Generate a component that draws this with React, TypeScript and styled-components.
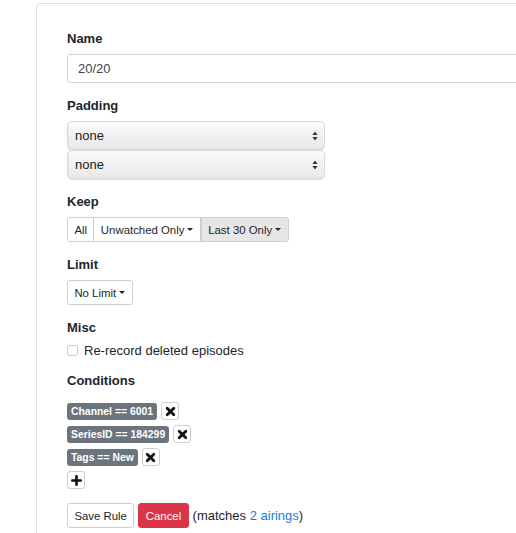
import React from "react";
import styled, { createGlobalStyle } from "styled-components";

const GlobalStyle = createGlobalStyle`
  html, body {
    margin: 0;
    padding: 0;
    overflow: hidden;
    background: #fff;
  }
  body {
    font-family: "Liberation Sans", Arial, Helvetica, sans-serif;
    font-size: 13px;
    color: #212529;
  }
`;

const Page = styled.div`
  padding: 3px 0 0 36px;
`;

const Card = styled.div`
  width: 620px;
  min-height: 620px;
  box-sizing: border-box;
  border: 1px solid #e1e1e1;
  border-radius: 4px;
  padding: 26px 30px;
`;

const FormGroup = styled.div`
  margin-bottom: 14px;
`;

const Label = styled.label`
  display: block;
  font-weight: bold;
  font-size: 13px;
  line-height: 18px;
  margin-bottom: 6px;
`;

const TextInput = styled.input`
  display: block;
  width: 100%;
  height: 29px;
  box-sizing: border-box;
  border: 1px solid #ced4da;
  border-radius: 3px;
  padding: 0 10px;
  font-family: inherit;
  font-size: 13px;
  color: #444;
  outline: none;
`;

const FakeSelect = styled.div`
  width: 258px;
  height: 29px;
  box-sizing: border-box;
  display: flex;
  align-items: center;
  justify-content: space-between;
  padding: 0 6px 0 7px;
  border: 1px solid #d9d9d9;
  border-radius: 5px;
  background: linear-gradient(#fbfbfb, #efefef 60%, #e9e9e9);
  box-shadow: 0 1px 1px rgba(0, 0, 0, 0.12), inset 1px 0 0 rgba(0, 0, 0, 0.04);
  font-size: 13px;
  color: #222;
`;

const SelectArrows = styled.svg`
  width: 6px;
  height: 10px;
`;

const ButtonGroup = styled.div`
  display: inline-flex;
`;

const Button = styled.button<{ $active?: boolean; $variant?: "default" | "danger" }>`
  display: inline-flex;
  align-items: center;
  font-family: inherit;
  font-size: 11.4px;
  line-height: 16px;
  padding: 3.5px 6.4px;
  border: 1px solid ${(p) => (p.$variant === "danger" ? "#dc3545" : "#cfcfcf")};
  border-radius: 3px;
  background: ${(p) =>
    p.$variant === "danger" ? "#dc3545" : p.$active ? "#e6e6e6" : "#fff"};
  color: ${(p) => (p.$variant === "danger" ? "#fff" : "#212529")};
  cursor: pointer;

  ${ButtonGroup} > & {
    border-radius: 0;
  }
  ${ButtonGroup} > & + & {
    margin-left: -1px;
  }
  ${ButtonGroup} > &:first-child {
    border-radius: 3px 0 0 3px;
  }
  ${ButtonGroup} > &:last-child {
    border-radius: 0 3px 3px 0;
  }
`;

const Caret = styled.span`
  display: inline-block;
  margin-left: 3px;
  width: 0;
  height: 0;
  border-top: 3.4px solid currentColor;
  border-left: 3.4px solid transparent;
  border-right: 3.4px solid transparent;
`;

const CheckRow = styled.div`
  display: flex;
  align-items: center;
  line-height: 15px;
`;

const CheckBox = styled.span`
  width: 11px;
  height: 11px;
  box-sizing: border-box;
  border: 1px solid #cdcdcd;
  border-radius: 2px;
  background: #fff;
  margin-right: 6px;
`;

const ConditionList = styled.div`
  display: flex;
  flex-direction: column;
  align-items: flex-start;
  gap: 5px;
  padding-top: 6px;
`;

const ConditionRow = styled.div`
  display: flex;
  align-items: center;
  gap: 4px;
  height: 18px;
`;

const Badge = styled.span`
  display: inline-flex;
  align-items: center;
  height: 17px;
  box-sizing: border-box;
  padding: 0 4px;
  border-radius: 3px;
  background: #6c757d;
  color: #fff;
  font-size: 10.4px;
  font-weight: bold;
`;

const IconButton = styled.button`
  width: 18px;
  height: 18px;
  padding: 0;
  display: inline-flex;
  align-items: center;
  justify-content: center;
  border: 1px solid #cfcfcf;
  border-radius: 3px;
  background: #fff;
  cursor: pointer;
`;

const Footer = styled.div`
  display: flex;
  align-items: center;
  gap: 4px;
  margin-top: 14px;
`;

const Matches = styled.span`
  font-size: 13px;
`;

const Link = styled.a`
  color: #1a7be6;
  text-decoration: none;
`;

const TimesIcon = () => (
  <svg width="11" height="11" viewBox="0 0 11 11">
    <path d="M2.2 2.2 L8.8 8.8 M8.8 2.2 L2.2 8.8" stroke="#111" strokeWidth="2.8" strokeLinecap="round" />
  </svg>
);

const PlusIcon = () => (
  <svg width="11" height="11" viewBox="0 0 11 11">
    <path d="M5.5 1.3 V9.7 M1.3 5.5 H9.7" stroke="#111" strokeWidth="2.6" strokeLinecap="round" />
  </svg>
);

const Arrows = () => (
  <SelectArrows viewBox="0 0 6 10">
    <path d="M3 0.5 L5.6 4 H0.4 Z M3 9.5 L5.6 6 H0.4 Z" fill="#333" />
  </SelectArrows>
);

const conditions = ["Channel == 6001", "SeriesID == 184299", "Tags == New"];

export default function App() {
  return (
    <>
      <GlobalStyle />
      <Page>
        <Card>
          <FormGroup>
            <Label>Name</Label>
            <TextInput value="20/20" readOnly />
          </FormGroup>

          <FormGroup>
            <Label>Padding</Label>
            <FakeSelect>
              none
              <Arrows />
            </FakeSelect>
            <FakeSelect>
              none
              <Arrows />
            </FakeSelect>
          </FormGroup>

          <FormGroup>
            <Label>Keep</Label>
            <ButtonGroup>
              <Button>All</Button>
              <Button>
                Unwatched Only
                <Caret />
              </Button>
              <Button $active>
                Last 30 Only
                <Caret />
              </Button>
            </ButtonGroup>
          </FormGroup>

          <FormGroup>
            <Label>Limit</Label>
            <Button>
              No Limit
              <Caret />
            </Button>
          </FormGroup>

          <FormGroup>
            <Label>Misc</Label>
            <CheckRow>
              <CheckBox />
              Re-record deleted episodes
            </CheckRow>
          </FormGroup>

          <FormGroup>
            <Label>Conditions</Label>
            <ConditionList>
              {conditions.map((c) => (
                <ConditionRow key={c}>
                  <Badge>{c}</Badge>
                  <IconButton>
                    <TimesIcon />
                  </IconButton>
                </ConditionRow>
              ))}
              <ConditionRow>
                <IconButton>
                  <PlusIcon />
                </IconButton>
              </ConditionRow>
            </ConditionList>
            <Footer>
              <Button>Save Rule</Button>
              <Button $variant="danger">Cancel</Button>
              <Matches>
                (matches <Link href="#">2 airings</Link>)
              </Matches>
            </Footer>
          </FormGroup>
        </Card>
      </Page>
    </>
  );
}
